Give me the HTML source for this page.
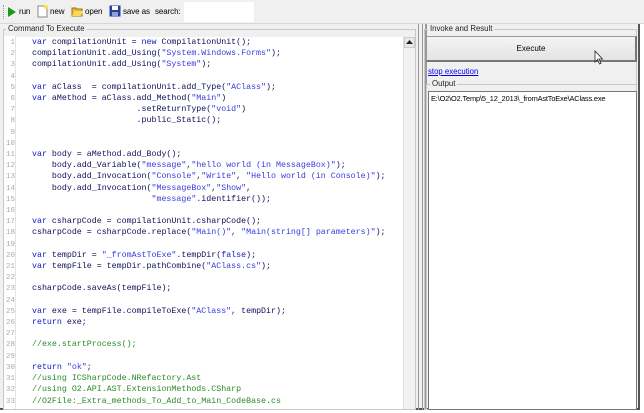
<!DOCTYPE html>
<html><head><meta charset="utf-8"><style>
*{margin:0;padding:0;box-sizing:border-box}
body{width:644px;height:413px;background:#fff;position:relative;overflow:hidden;font-family:"Liberation Sans",sans-serif;font-size:9px;color:#000}
.a{position:absolute}
#tb{left:0;top:0;width:644px;height:24px;background:#f0f0f0;border-bottom:1px solid #d8d8d8}
#tb span{position:absolute;top:7px;font-size:8px;letter-spacing:-0.1px}
#main{left:0;top:24px;width:640px;height:386px;background:#f0f0f0;border-right:2px solid #555;border-bottom:2px solid #555}
.grp{border:1px solid #c8c8c8}
.lbl{position:absolute;background:#f0f0f0;padding:0 2px;font-size:7.8px;color:#222}
#code{left:16px;top:37px;width:387px;height:372px;background:#fff}
pre{font-family:"Liberation Mono",monospace;font-size:8.3px;line-height:11.2px;color:#10105a}
.k{color:#1515c8}.s{color:#3a3ae0}.c{color:#2a8a2a}
</style></head><body>
<div class="a" id="tb">
<div class="a" style="left:3px;top:5px;width:1px;height:14px;border-left:1px dotted #999"></div>
<svg class="a" style="left:7px;top:6px" width="10" height="12"><path d="M1 1 L9 6 L1 11Z" fill="#1a9a1a"/></svg>
<span style="left:19px">run</span>
<svg class="a" style="left:37px;top:5px" width="11" height="13"><path d="M1 1h6l3 3v8H1Z" fill="#fff" stroke="#888"/><circle cx="9" cy="2" r="2" fill="#ffe040"/></svg>
<span style="left:50px">new</span>
<svg class="a" style="left:71px;top:5px" width="13" height="12"><path d="M1 3h4l1 1h5v7H1Z" fill="#e8b830" stroke="#a07010"/><path d="M3 6h9l-2 5H1Z" fill="#f8d860"/></svg>
<span style="left:85px">open</span>
<svg class="a" style="left:109px;top:5px" width="12" height="12"><rect x="0.5" y="0.5" width="11" height="11" fill="#2a3ea0"/><rect x="3" y="1" width="6" height="4" fill="#fff"/><rect x="3" y="7" width="6" height="4" fill="#8aa0d8"/></svg>
<span style="left:123px">save as</span>
<span style="left:155px">search:</span>
<div class="a" style="left:184px;top:2px;width:70px;height:20px;background:#fff"></div>
</div>
<div class="a" id="main"></div>
<div class="a grp" style="left:3px;top:29px;width:413px;height:381px"></div>
<div class="lbl" style="left:6px;top:24px">Command To Execute</div>
<div class="a" style="left:4px;top:36px;width:12px;height:373px;background:#fff;border-right:1px solid #e4e4e4"></div>
<div class="a" id="code">
<pre style="position:absolute;left:16px;top:0">
<span class="k">var</span> compilationUnit = <span class="k">new</span> CompilationUnit();
compilationUnit.add_Using(<span class="s">"System.Windows.Forms"</span>);
compilationUnit.add_Using(<span class="s">"System"</span>);

<span class="k">var</span> aClass  = compilationUnit.add_Type(<span class="s">"AClass"</span>);
<span class="k">var</span> aMethod = aClass.add_Method(<span class="s">"Main"</span>)
                     .setReturnType(<span class="s">"void"</span>)
                     .public_Static();


<span class="k">var</span> body = aMethod.add_Body();
    body.add_Variable(<span class="s">"message"</span>,<span class="s">"hello world (in MessageBox)"</span>);
    body.add_Invocation(<span class="s">"Console"</span>,<span class="s">"Write"</span>, <span class="s">"Hello world (in Console)"</span>);
    body.add_Invocation(<span class="s">"MessageBox"</span>,<span class="s">"Show"</span>,
                        <span class="s">"message"</span>.identifier());

<span class="k">var</span> csharpCode = compilationUnit.csharpCode();
csharpCode = csharpCode.replace(<span class="s">"Main()"</span>, <span class="s">"Main(string[] parameters)"</span>);

<span class="k">var</span> tempDir = <span class="s">"_fromAstToExe"</span>.tempDir(<span class="k">false</span>);
<span class="k">var</span> tempFile = tempDir.pathCombine(<span class="s">"AClass.cs"</span>);

csharpCode.saveAs(tempFile);

<span class="k">var</span> exe = tempFile.compileToExe(<span class="s">"AClass"</span>, tempDir);
<span class="k">return</span> exe;

<span class="c">//exe.startProcess();</span>

<span class="k">return</span> <span class="s">"ok"</span>;
<span class="c">//using ICSharpCode.NRefactory.Ast</span>
<span class="c">//using O2.API.AST.ExtensionMethods.CSharp</span>
<span class="c">//O2File:_Extra_methods_To_Add_to_Main_CodeBase.cs</span>
</pre>
</div>
<pre class="a" style="left:1px;top:37px;color:#aaa;width:14px;text-align:right;font-size:7.5px;line-height:11.2px;padding-top:1px">1
2
3
4
5
6
7
8
9
10
11
12
13
14
15
16
17
18
19
20
21
22
23
24
25
26
27
28
29
30
31
32
33</pre>
<div class="a" style="left:403px;top:36px;width:12px;height:373px;background:#f2f2f2;border-left:1px solid #e0e0e0"></div>
<div class="a" style="left:404px;top:37px;width:11px;height:11px;background:#e8e8e8;border:1px solid #ccc"></div>
<svg class="a" style="left:406px;top:40px" width="7" height="5"><path d="M0 4L3.5 0L7 4Z" fill="#222"/></svg>
<div class="a" style="left:418px;top:24px;width:1px;height:386px;background:#999"></div>
<div class="a" style="left:422px;top:24px;width:1px;height:386px;background:#999"></div>
<div class="a" style="left:425px;top:24px;width:2px;height:386px;background:#999"></div>
<div class="a grp" style="left:424px;top:29px;width:213px;height:381px"></div>
<div class="lbl" style="left:428px;top:24px">Invoke and Result</div>
<div class="a" style="left:426px;top:36px;width:211px;height:26px;background:linear-gradient(#f4f4f4,#e4e4e4);border:1px solid #999;border-right:2px solid #777;border-bottom:2px solid #777;text-align:center;line-height:24px;font-size:8px">Execute</div>
<svg class="a" style="left:594px;top:50px" width="10" height="15"><path d="M1 1V12L3.5 9.5L5.5 14L7 13.3L5 9H8.5Z" fill="#fff" stroke="#222" stroke-width="0.8"/></svg>
<div class="a" style="left:428px;top:67px;font-size:7.8px;color:#00e;text-decoration:underline">stop execution</div>
<div class="a grp" style="left:426px;top:84px;width:211px;height:326px"></div>
<div class="lbl" style="left:430px;top:79px">Output</div>
<div class="a" style="left:428px;top:91px;width:209px;height:319px;background:#fff;border:1px solid #777"></div>
<div class="a" style="left:431px;top:94px;font-size:7.4px;letter-spacing:-0.15px;white-space:nowrap">E:\O2\O2.Temp\5_12_2013\_fromAstToExe\AClass.exe</div>
</body></html>
